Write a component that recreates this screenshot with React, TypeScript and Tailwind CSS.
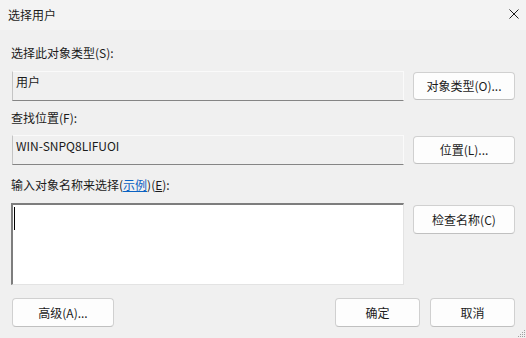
import React from "react";

const font = { fontFamily: '"Noto Sans CJK SC", "Noto Sans", sans-serif' };

function Btn({ children, className = "" }: { children: React.ReactNode; className?: string }) {
  return (
    <div
      className={`flex items-center justify-center rounded-[4px] border border-[#d0d0d0] border-b-[#c0c0c0] bg-[#fdfdfd] text-[12px] text-[#1b1b1b] ${className}`}
    >
      {children}
    </div>
  );
}

function ReadBox({ children }: { children: React.ReactNode }) {
  return (
    <div className="flex h-[30px] w-[392px] items-start border border-l-[#c4c4c4] border-r-[#fafafa] border-t-[#fafafa] border-b-[#858585] bg-[#f0f0f0] pl-[3px] pt-[2px] text-[12px] leading-[16px] text-[#1b1b1b]">
      {children}
    </div>
  );
}

export default function App() {
  return (
    <div className="relative flex h-[338px] w-[526px] flex-col bg-[#f0f0f0] text-[#1b1b1b]" style={font}>
      <div className="flex h-[30px] items-center justify-between bg-[#f3f3f3] pl-[8px] pr-[7px]">
        <span className="text-[12px] leading-[16px]">选择用户</span>
        <svg width="10" height="10" viewBox="0 0 10 10" className="mb-[2px]">
          <path d="M0.5 0.5 L9.5 9.5 M9.5 0.5 L0.5 9.5" stroke="#1b1b1b" strokeWidth="1" />
        </svg>
      </div>
      <div className="flex flex-col pl-[12px] pr-[11px]">
        <div className="mt-[15px] -ml-[1px] text-[12px] leading-[16px]">选择此对象类型(S):</div>
        <div className="mt-[10px] flex items-center gap-[9px]">
          <ReadBox>用户</ReadBox>
          <Btn className="h-[28px] w-[102px]">对象类型(O)...</Btn>
        </div>
        <div className="mt-[9px] -ml-[1px] text-[12px] leading-[16px]">查找位置(F):</div>
        <div className="mt-[9px] flex items-center gap-[9px]">
          <ReadBox>WIN-SNPQ8LIFUOI</ReadBox>
          <Btn className="h-[28px] w-[102px]">位置(L)...</Btn>
        </div>
        <div className="mt-[12px] -ml-[1px] text-[12px] leading-[16px]">
          输入对象名称来选择(<span className="text-[#0b62c2] underline">示例</span>)(<span className="underline">E</span>):
        </div>
        <div className="mt-[10px] flex items-start gap-[9px]">
          <div className="-ml-[1px] h-[82px] w-[393px] border-l-2 border-t-2 border-b border-r border-l-[#7d7d7d] border-t-[#7d7d7d] border-b-[#e3e3e3] border-r-[#e3e3e3] bg-white pl-[1px] pt-[2px]">
            <div className="h-[23px] w-[1px] bg-black" />
          </div>
          <Btn className="mt-[2px] h-[29px] w-[102px]">检查名称(C)</Btn>
        </div>
        <div className="mt-[13px] flex items-center">
          <Btn className="h-[29px] w-[102px]">高级(A)...</Btn>
          <div className="flex-1" />
          <Btn className="h-[29px] w-[85px]">确定</Btn>
          <Btn className="ml-[10px] h-[29px] w-[85px]">取消</Btn>
        </div>
      </div>
      <svg width="10" height="10" viewBox="0 0 10 10" className="absolute bottom-0 right-0">
        <rect x="8" y="2" width="1" height="1" fill="#a0a0a0" />
        <rect x="6" y="4" width="1" height="1" fill="#a0a0a0" />
        <rect x="8" y="4" width="1" height="1" fill="#a0a0a0" />
        <rect x="4" y="6" width="1" height="1" fill="#a0a0a0" />
        <rect x="6" y="6" width="1" height="1" fill="#a0a0a0" />
        <rect x="8" y="6" width="1" height="1" fill="#a0a0a0" />
        <rect x="2" y="8" width="1" height="1" fill="#a0a0a0" />
        <rect x="4" y="8" width="1" height="1" fill="#a0a0a0" />
        <rect x="6" y="8" width="1" height="1" fill="#a0a0a0" />
        <rect x="8" y="8" width="1" height="1" fill="#a0a0a0" />
      </svg>
    </div>
  );
}
